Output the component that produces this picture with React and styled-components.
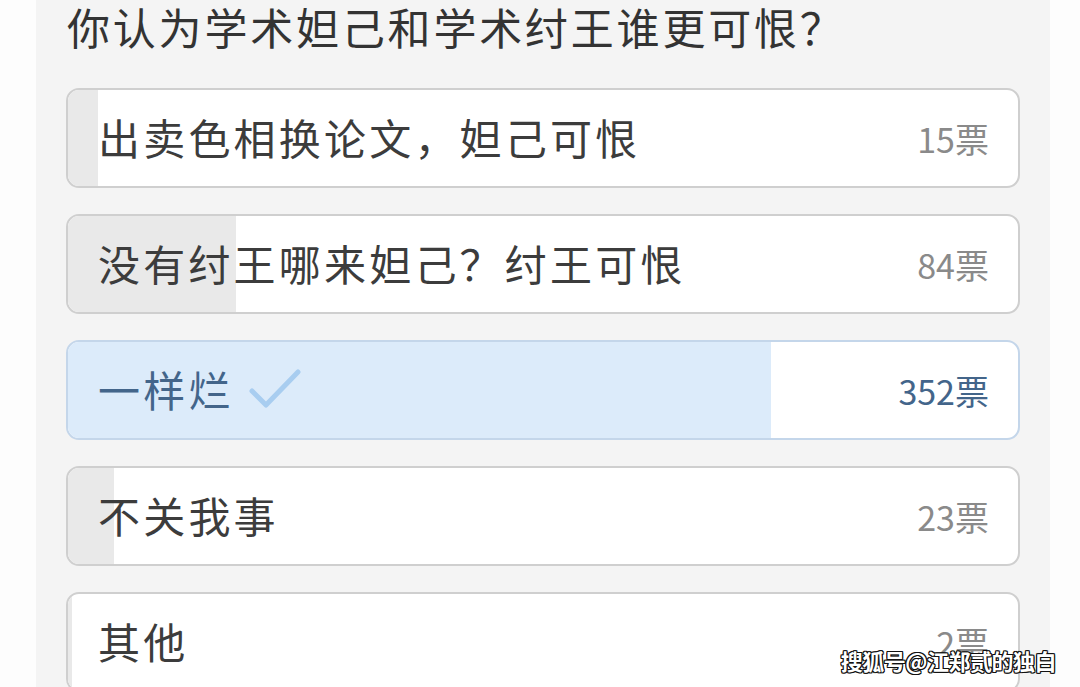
import React from 'react';
import styled, { createGlobalStyle } from 'styled-components';

const GlobalStyle = createGlobalStyle`
  html, body {
    margin: 0;
    padding: 0;
    background: #ffffff;
    overflow: hidden;
  }
  body {
    font-family: "Noto Sans CJK SC", "Noto Sans", sans-serif;
  }
`;

const Page = styled.div`
  width: 1080px;
  height: 687px;
  display: flex;
  background: #fdfdfd;
  position: relative;
  overflow: hidden;
`;

const Panel = styled.div`
  margin-left: 36px;
  width: 1014px;
  background: #f4f4f4;
  padding: 0 30px 0 30px;
  box-sizing: border-box;
`;

const Title = styled.h1`
  margin: 0;
  padding: 2px 0 0 1px;
  height: 88px;
  box-sizing: border-box;
  font-size: 43px;
  font-weight: 400;
  line-height: 48px;
  color: #333333;
  letter-spacing: 2.8px;
`;

const OptionList = styled.div`
  display: flex;
  flex-direction: column;
  gap: 26px;
`;

const Option = styled.div`
  position: relative;
  height: 100px;
  border-radius: 13px;
  border: 2px solid ${(p) => (p.$chosen ? '#c4d6ea' : '#cfcfcf')};
  background: #ffffff;
  box-sizing: border-box;
  overflow: hidden;
  display: flex;
  align-items: center;
  flex-shrink: 0;
`;

const Fill = styled.div`
  position: absolute;
  left: 0;
  top: 0;
  bottom: 0;
  background: ${(p) => (p.$chosen ? '#dcebfa' : '#e9e9e9')};
`;

const Label = styled.span`
  position: relative;
  flex: 1;
  display: flex;
  align-items: center;
  padding-left: 30px;
  margin-top: -3px;
  font-size: 42px;
  letter-spacing: 3.2px;
  color: ${(p) => (p.$chosen ? '#43658a' : '#3c3c3c')};
`;

const Check = styled.svg`
  margin-left: 12px;
  width: 56px;
  height: 44px;
`;

const Count = styled.span`
  position: relative;
  padding-right: 29px;
  font-size: 34px;
  color: ${(p) => (p.$chosen ? '#43658a' : '#8a8a8a')};
`;

const Watermark = styled.div`
  position: absolute;
  right: 24px;
  bottom: 11px;
  font-size: 22px;
  font-weight: 700;
  color: #ffffff;
  letter-spacing: -0.5px;
  text-shadow:
    -1px -1px 0 #111, 1px -1px 0 #111, -1px 1px 0 #111, 1px 1px 0 #111,
    0 -1px 0 #111, 0 1px 0 #111, -1px 0 0 #111, 1px 0 0 #111;
`;

const options = [
  { label: '出卖色相换论文，妲己可恨', votes: 15 },
  { label: '没有纣王哪来妲己？纣王可恨', votes: 84 },
  { label: '一样烂', votes: 352, chosen: true },
  { label: '不关我事', votes: 23 },
  { label: '其他', votes: 2 },
];

const total = options.reduce((sum, o) => sum + o.votes, 0);

function App() {
  return (
    <Page>
      <GlobalStyle />
      <Panel>
        <Title>你认为学术妲己和学术纣王谁更可恨？</Title>
        <OptionList>
          {options.map((o) => (
            <Option key={o.label} $chosen={o.chosen}>
              <Fill $chosen={o.chosen} style={{ width: `${(o.votes / total) * 100}%` }} />
              <Label $chosen={o.chosen}>
                {o.label}
                {o.chosen && (
                  <Check viewBox="0 0 56 44">
                    <path d="M6 24 L20 38 L52 5" fill="none" stroke="#a8cdf0" strokeWidth="5" strokeLinecap="round" strokeLinejoin="round" />
                  </Check>
                )}
              </Label>
              <Count $chosen={o.chosen}>{o.votes}票</Count>
            </Option>
          ))}
        </OptionList>
      </Panel>
      <Watermark>搜狐号@江郑贰的独白</Watermark>
    </Page>
  );
}

export default App;
